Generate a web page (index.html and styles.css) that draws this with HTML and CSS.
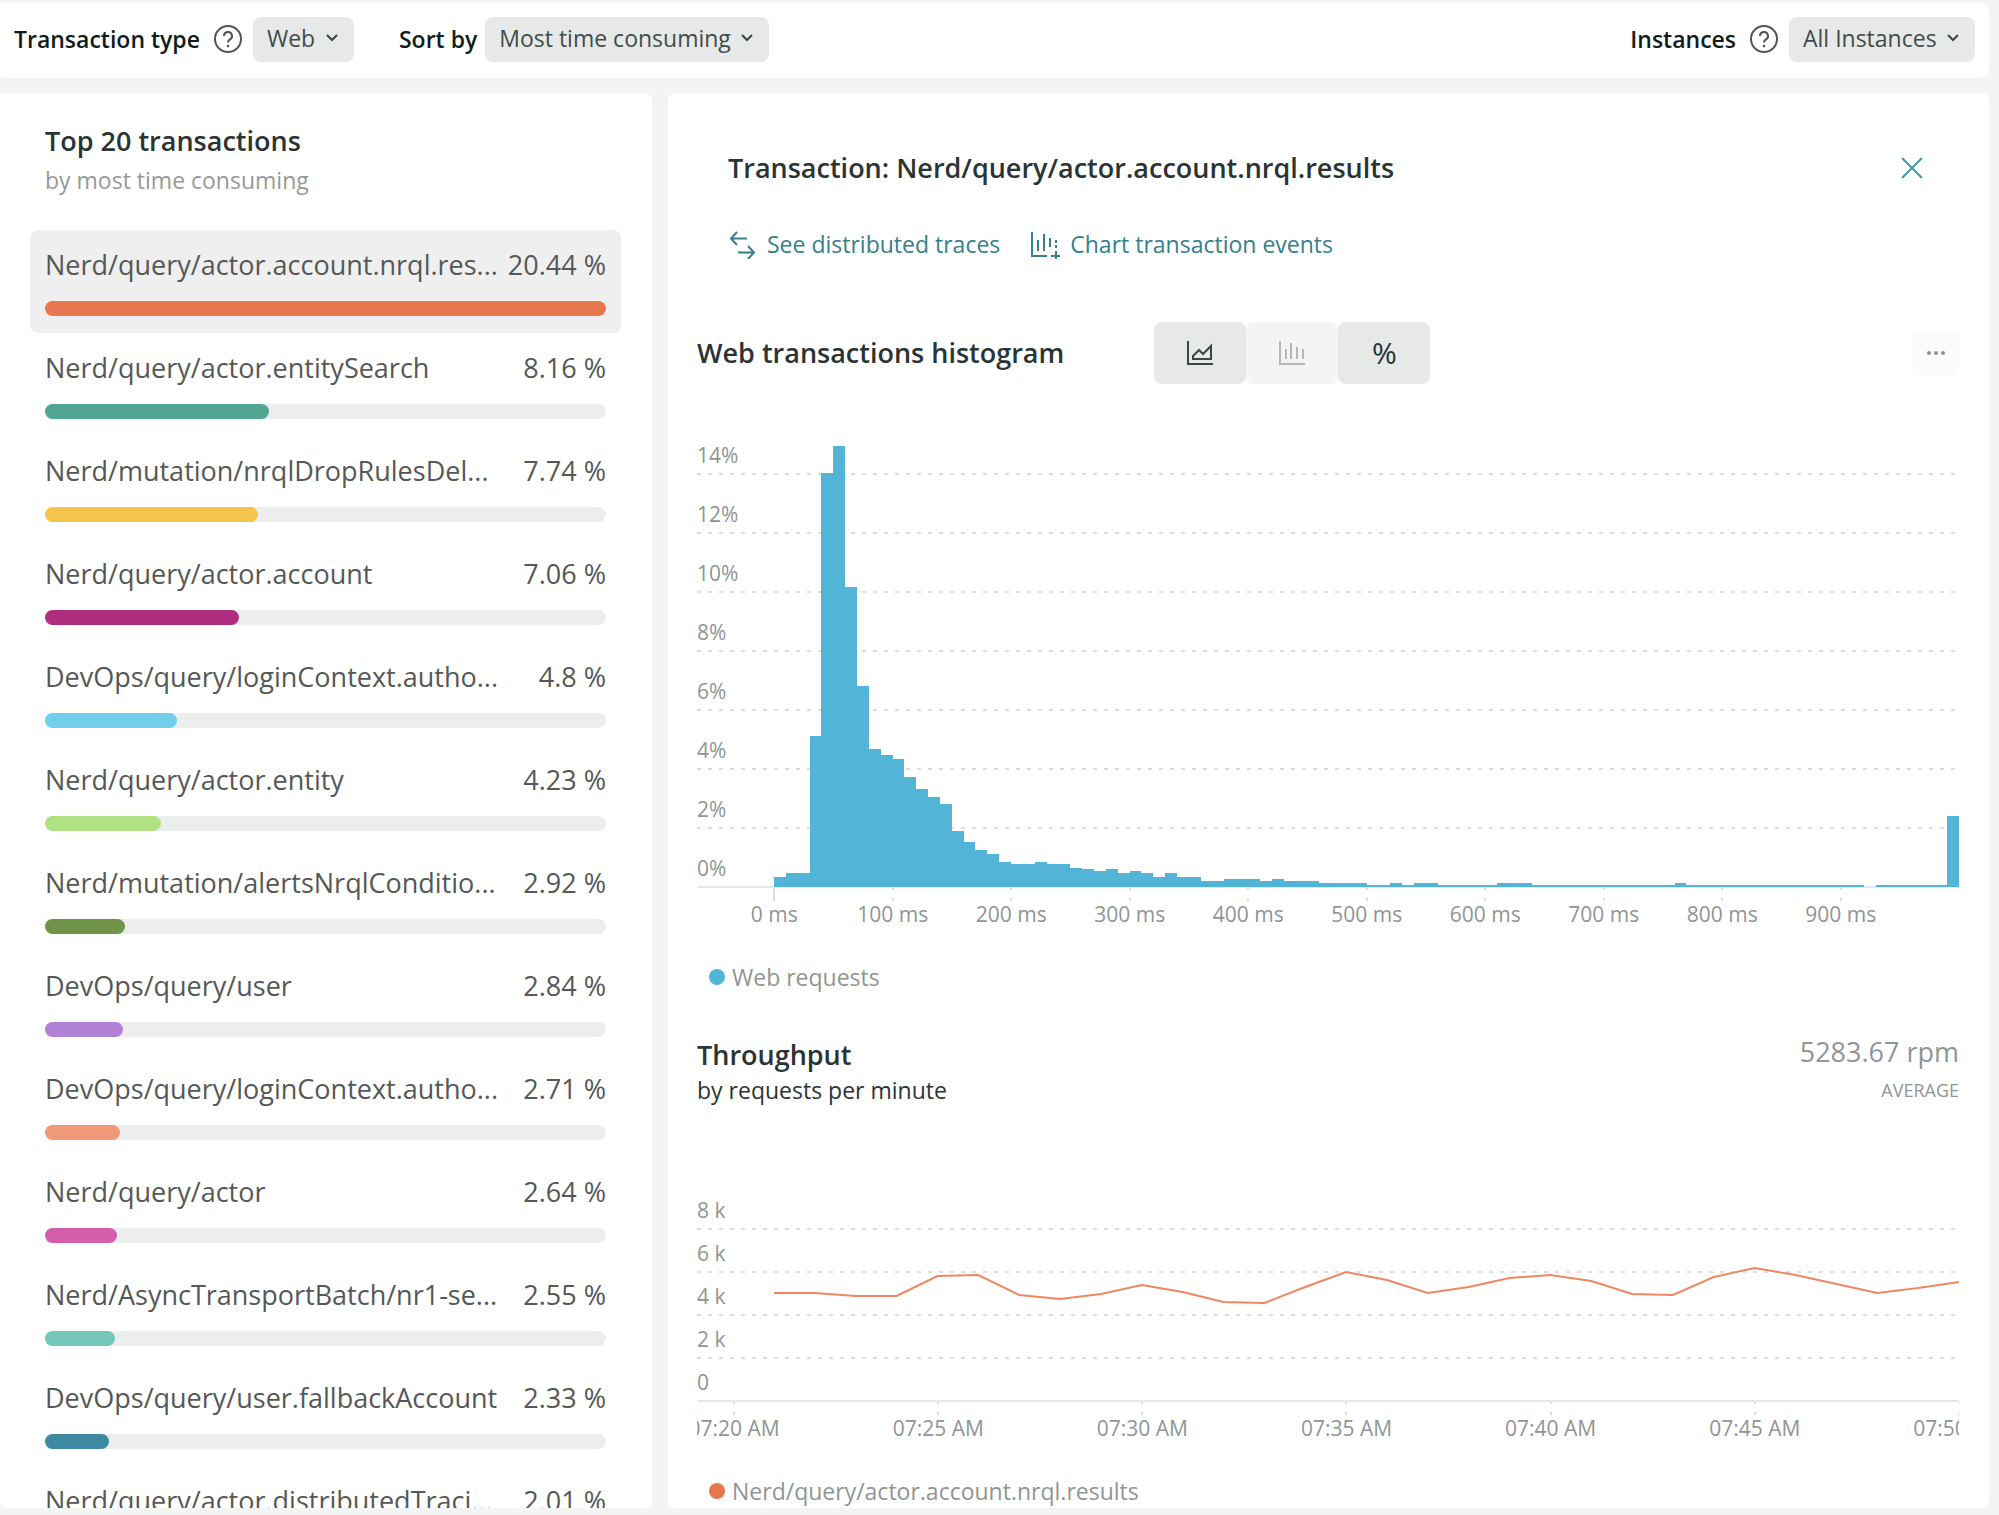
FILE: index.html
```
<!DOCTYPE html>
<html lang="en">
<head>
<meta charset="utf-8">
<meta name="viewport" content="width=device-width, initial-scale=1">
<title>Transactions</title>
<link rel="stylesheet" href="styles.css">
</head>
<body>
<div class="app">
  <header class="toolbar">
    <div class="field">
      <label class="field-label" for="type">Transaction type</label>
      <button class="help" type="button" aria-label="About transaction types">
        <svg width="30" height="30" viewBox="0 0 30 30"><circle cx="15" cy="15" r="13"/><path d="M11 12a4 4 0 1 1 6 3.4c-1.3.8-2 1.5-2 3.100"/><circle class="dot" cx="15" cy="22" r="1.3"/></svg>
      </button>
      <span class="select-box">
        <select id="type"><option>Web</option></select>
        <svg class="chevron" width="14" height="10" viewBox="0 0 14 10"><path d="M2 2l5 5 5-5"/></svg>
      </span>
    </div>
    <div class="field field-sort">
      <label class="field-label" for="sort">Sort by</label>
      <span class="select-box">
        <select id="sort"><option>Most time consuming</option></select>
        <svg class="chevron" width="14" height="10" viewBox="0 0 14 10"><path d="M2 2l5 5 5-5"/></svg>
      </span>
    </div>
    <div class="field field-instances">
      <label class="field-label" for="instances">Instances</label>
      <button class="help" type="button" aria-label="About instances">
        <svg width="30" height="30" viewBox="0 0 30 30"><circle cx="15" cy="15" r="13"/><path d="M11 12a4 4 0 1 1 6 3.4c-1.3.8-2 1.5-2 3.100"/><circle class="dot" cx="15" cy="22" r="1.3"/></svg>
      </button>
      <span class="select-box">
        <select id="instances"><option>All Instances</option></select>
        <svg class="chevron" width="14" height="10" viewBox="0 0 14 10"><path d="M2 2l5 5 5-5"/></svg>
      </span>
    </div>
  </header>

  <div class="columns">
    <section class="panel list-panel">
      <h2 class="title">Top 20 transactions</h2>
      <p class="subtitle">by most time consuming</p>
      <ul class="transactions">
        <li class="row selected"><span>Nerd/query/actor.account.nrql.res...</span><span>20.44 %</span><div class="track"><div class="fill c1" style="width:100%"></div></div></li>
        <li class="row"><span>Nerd/query/actor.entitySearch</span><span>8.16 %</span><div class="track"><div class="fill c2" style="width:39.9%"></div></div></li>
        <li class="row"><span>Nerd/mutation/nrqlDropRulesDel...</span><span>7.74 %</span><div class="track"><div class="fill c3" style="width:37.9%"></div></div></li>
        <li class="row"><span>Nerd/query/actor.account</span><span>7.06 %</span><div class="track"><div class="fill c4" style="width:34.5%"></div></div></li>
        <li class="row"><span>DevOps/query/loginContext.autho...</span><span>4.8 %</span><div class="track"><div class="fill c5" style="width:23.5%"></div></div></li>
        <li class="row"><span>Nerd/query/actor.entity</span><span>4.23 %</span><div class="track"><div class="fill c6" style="width:20.7%"></div></div></li>
        <li class="row"><span>Nerd/mutation/alertsNrqlConditio...</span><span>2.92 %</span><div class="track"><div class="fill c7" style="width:14.3%"></div></div></li>
        <li class="row"><span>DevOps/query/user</span><span>2.84 %</span><div class="track"><div class="fill c8" style="width:13.9%"></div></div></li>
        <li class="row"><span>DevOps/query/loginContext.autho...</span><span>2.71 %</span><div class="track"><div class="fill c9" style="width:13.3%"></div></div></li>
        <li class="row"><span>Nerd/query/actor</span><span>2.64 %</span><div class="track"><div class="fill c10" style="width:12.9%"></div></div></li>
        <li class="row"><span>Nerd/AsyncTransportBatch/nr1-se...</span><span>2.55 %</span><div class="track"><div class="fill c11" style="width:12.4%"></div></div></li>
        <li class="row"><span>DevOps/query/user.fallbackAccount</span><span>2.33 %</span><div class="track"><div class="fill c12" style="width:11.4%"></div></div></li>
        <li class="row"><span>Nerd/query/actor.distributedTraci...</span><span>2.01 %</span></li>
      </ul>
    </section>

    <section class="panel detail-panel">
      <div class="detail-head">
        <h2 class="title">Transaction: Nerd/query/actor.account.nrql.results</h2>
        <button class="close" type="button" aria-label="Close">
          <svg width="24" height="24" viewBox="0 0 24 24"><path d="M2 2l20 20M22 2L2 22"/></svg>
        </button>
      </div>
      <nav class="links">
        <a href="#traces">
          <svg width="28" height="30" viewBox="0 0 28 30"><path d="M8 3L2 9.500l6 6.500M2 9.500h16M19 17l6 6.500-6 6.500M25 23.500H9"/></svg>
          See distributed traces
        </a>
        <a href="#events">
          <svg width="30" height="30" viewBox="0 0 30 30"><path d="M2 3v24h15M8 11v11M14 5v17M20 9v9M26 11v3M26 16v3M26 22v9M21 27h9"/></svg>
          Chart transaction events
        </a>
      </nav>

      <div class="chart-head">
        <h3 class="title">Web transactions histogram</h3>
        <div class="toggle">
          <button type="button" aria-label="Area chart">
            <svg width="28" height="28" viewBox="0 0 28 28"><path d="M2 2v23h25"/><path d="M7 20v-3l6-6 4 4 8-8v13z"/></svg>
          </button>
          <button type="button" aria-label="Histogram" disabled>
            <svg width="28" height="28" viewBox="0 0 28 28"><path d="M2 2v23h25M8 10v10M13 4v16M19 8v12M25 10v10"/></svg>
          </button>
          <button class="percent" type="button">%</button>
        </div>
        <button class="more" type="button" aria-label="More options">
          <svg width="20" height="6" viewBox="0 0 20 6"><circle cx="3" cy="3" r="2"/><circle cx="10" cy="3" r="2"/><circle cx="17" cy="3" r="2"/></svg>
        </button>
      </div>

      <div class="chart histogram">
        <div class="grid">
          <div>14%</div><div>12%</div><div>10%</div><div>8%</div><div>6%</div><div>4%</div><div>2%</div><div>0%</div>
        </div>
        <svg class="plot bars" viewBox="0 0 100 472" preserveAspectRatio="none" role="img" aria-label="Share of web requests by response time">
          <path d="M0 471V461h1V457h2V320h1V57h1V30h1V171h1V270h1V333h1V339h1V343h1V361h1V373h1V381h1V388h1V415h1V426h1V434h1V438h1V446h1V448h2V446h1V448h2V452h1V453h1V455h1V453h1V457h1V455h1V457h1V461h1V457h1V461h2V465h2V463h3V465h1V463h1V465h3V467h4V469h2V467h1V469h1V467h2V469h5V467h3V469h12V467h1V469h15V471h1V469h6V400h1V471z"/>
        </svg>
        <div class="ticks ticks-ms">
          <div class="origin">0 ms</div><div>100 ms</div><div>200 ms</div><div>300 ms</div><div>400 ms</div><div>500 ms</div><div>600 ms</div><div>700 ms</div><div>800 ms</div><div>900 ms</div>
        </div>
      </div>
      <p class="legend"><i class="key blue"></i>Web requests</p>

      <div class="throughput-head">
        <div>
          <h3 class="title">Throughput</h3>
          <p class="caption">by requests per minute</p>
        </div>
        <div class="stat">
          <p class="stat-value">5283.67 rpm</p>
          <p class="stat-label">AVERAGE</p>
        </div>
      </div>

      <div class="chart throughput">
        <div class="grid">
          <div>8 k</div><div>6 k</div><div>4 k</div><div>2 k</div><div>0</div>
        </div>
        <svg class="plot line" viewBox="0 0 29 215" preserveAspectRatio="none" role="img" aria-label="Requests per minute over time">
          <polyline points="0,106 1,106 2,109 3,109 4,89 5,88 6,108 7,112 8,107 9,98 10,105 11,115 12,116 13,100 14,85 15,93 16,106 17,100 18,91 19,88 20,94 21,107 22,108 23,90 24,81 25,88 26,97 27,106 28,101 29,95"/>
        </svg>
        <div class="ticks ticks-time">
          <div>07:20 AM</div><div>07:25 AM</div><div>07:30 AM</div><div>07:35 AM</div><div>07:40 AM</div><div>07:45 AM</div><div>07:50 AM</div>
        </div>
      </div>
      <p class="legend"><i class="key orange"></i>Nerd/query/actor.account.nrql.results</p>
    </section>
  </div>
</div>
</body>
</html>
```
FILE: styles.css
```
* { box-sizing: border-box; }

body {
  margin: 0;
  background: #f3f5f4;
  color: #2a3434;
  font: 23px/30px "Open Sans", "Noto Sans", sans-serif;
}

h2, h3, p, ul { margin: 0; padding: 0; }
button, select { font: inherit; color: inherit; border: 0; margin: 0; }
button { padding: 0; background: none; display: grid; place-items: center; }
svg { display: block; fill: none; stroke: currentColor; stroke-width: 2; }

.app {
  height: 100vh;
  padding: 3px 10px 7px 0;
  display: flex;
  flex-direction: column;
  gap: 15px;
}

/* Toolbar */
.toolbar {
  display: flex;
  align-items: center;
  padding: 14px 14px 16px;
  background: #fff;
  border-radius: 0 8px 8px 4px;
}
.field { display: flex; align-items: center; }
.field-sort { margin-left: 45px; gap: 8px; }
.field-instances { margin-left: auto; }
.field-label { padding-bottom: 2px; font-weight: 600; color: #101c1c; white-space: nowrap; }
.help { margin: 0 10px 2px 13px; color: #4c5656; }
.help .dot { fill: currentColor; stroke: none; }
.select-box { position: relative; display: block; }
.select-box select {
  display: block;
  appearance: none;
  height: 45px;
  padding: 0 38px 3px 14px;
  border-radius: 8px;
  background: #e7e9e8;
  color: #414b4b;
}
.chevron {
  position: absolute;
  right: 15px;
  top: 16px;
  color: #3a4444;
  pointer-events: none;
}

/* Panels */
.columns {
  flex: 1;
  min-height: 0;
  display: grid;
  grid-template-columns: minmax(0, 652fr) minmax(0, 1321fr);
  gap: 16px;
}
.panel { background: #fff; border-radius: 8px; overflow: hidden; }
.title { font-size: 27px; line-height: 36px; font-weight: 600; white-space: nowrap; }

/* Transaction list */
.list-panel { padding: 30px 31px 0 30px; border-top-left-radius: 4px; }
.list-panel .title, .subtitle { padding-left: 15px; }
.subtitle { margin-top: 6px; color: #959a99; }
.transactions { margin-top: 35px; list-style: none; }
.row {
  height: 103px;
  padding: 17px 15px;
  display: grid;
  grid-template-columns: 1fr auto;
  grid-template-rows: 36px 15px;
  row-gap: 18px;
  font-size: 27px;
  line-height: 36px;
  color: #555857;
  white-space: nowrap;
}
.selected { background: #efefef; border-radius: 8px; }
.track { grid-column: 1 / -1; height: 15px; border-radius: 8px; background: #eceeed; }
.fill { height: 15px; border-radius: 8px; }
.c1 { background: #e8774f; }
.c2 { background: #50a593; }
.c3 { background: #f5c44b; }
.c4 { background: #b02e80; }
.c5 { background: #71cfec; }
.c6 { background: #b0e283; }
.c7 { background: #6f9448; }
.c8 { background: #b282d6; }
.c9 { background: #f09977; }
.c10 { background: #d35fac; }
.c11 { background: #74c6b9; }
.c12 { background: #3e88a2; }

/* Detail */
.detail-panel { padding: 57px 30px 0 29px; }
.detail-head { display: flex; justify-content: space-between; align-items: center; padding: 0 35px 0 31px; }
.close { color: #3f9aa5; }
.links { display: flex; gap: 30px; margin-top: 43px; padding-left: 32px; }
.links a { display: flex; gap: 10px; color: #34808b; text-decoration: none; white-space: nowrap; }

.chart-head { display: flex; align-items: center; margin-top: 63px; }
.toggle { display: flex; margin-left: 90px; }
.toggle button { width: 92px; height: 62px; border-radius: 8px; background: #e7e9e8; color: #3a4646; }
.toggle button:disabled { background: #f3f5f4; color: #b4b7b6; }
.toggle .percent { font-size: 30px; font-weight: 500; color: #2a3434; }
.more { width: 47px; height: 45px; margin-left: auto; border-radius: 8px; background: #fafbfb; color: #8e9292; }
.more svg { fill: currentColor; stroke: none; }

/* Charts */
.chart { position: relative; font-size: 21px; line-height: 20px; color: #8f9594; overflow: hidden; }
.histogram { margin-top: 32px; }
.throughput { margin-top: 82px; }
.grid > div {
  height: 59px;
  padding-bottom: 10px;
  display: flex;
  align-items: flex-end;
  background: repeating-linear-gradient(90deg, #dcdedd 0 4px, transparent 4px 11px) bottom / 100% 2px no-repeat;
}
.throughput .grid > div { height: 43px; }
.grid > div:last-child { background: linear-gradient(#e6e8e7, #e6e8e7) bottom / 100% 2px no-repeat; }
.plot { position: absolute; top: 0; left: 77px; width: calc(100% - 77px); }
.bars { height: 472px; fill: #52b5d7; stroke: none; shape-rendering: crispEdges; }
.line { height: 215px; stroke: #ee8762; }
.line polyline { vector-effect: non-scaling-stroke; }
.ticks { display: flex; text-align: center; }
.ticks-ms { padding: 0 59px 0 18px; }
.ticks-time { margin: 0 -102px 0 -65px; }
.ticks > div {
  flex: 1 1 0;
  padding: 16px 0 5px;
  white-space: nowrap;
  background:
    linear-gradient(#dcdedd, #dcdedd) 50% 0 / 2px 2px no-repeat,
    linear-gradient(#dcdedd, #dcdedd) 50% 10px / 2px 3px no-repeat;
}
.ticks > .origin { background: linear-gradient(#dcdedd, #dcdedd) 50% 0 / 2px 13px no-repeat; }

.legend { display: flex; align-items: center; gap: 7px; margin-top: 33px; padding-left: 12px; color: #8f9594; }
.key { width: 16px; height: 16px; border-radius: 50%; }
.blue { background: #52b5d7; }
.orange { background: #e8774f; }

.throughput-head { display: flex; justify-content: space-between; margin-top: 45px; }
.caption { margin-top: 2px; }
.stat { text-align: right; color: #8f9594; }
.stat-value { font-size: 27px; }
.stat-label { margin-top: 8px; font-size: 18px; }
```
